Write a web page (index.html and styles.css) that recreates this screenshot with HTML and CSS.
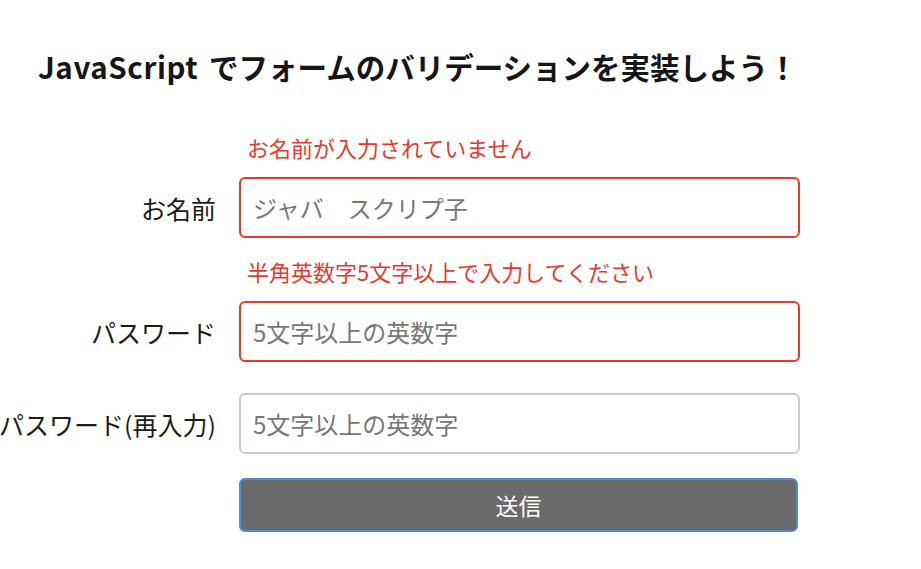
FILE: index.html
```html
<!DOCTYPE html>
<html lang="ja">
<head>
<meta charset="utf-8">
<title>JavaScript でフォームのバリデーションを実装しよう！</title>
<link rel="stylesheet" href="styles.css">
</head>
<body>
<main class="page">
  <h1 class="title"><span class="latin">JavaScript</span> でフォームのバリデーションを実装しよう！</h1>
  <form class="form">
    <div class="field has-error">
      <p class="error">お名前が入力されていません</p>
      <label class="label" for="name">お名前</label>
      <input class="input invalid" id="name" type="text" placeholder="ジャバ　スクリプ子">
    </div>
    <div class="field has-error">
      <p class="error">半角英数字5文字以上で入力してください</p>
      <label class="label" for="pw">パスワード</label>
      <input class="input invalid" id="pw" type="password" placeholder="5文字以上の英数字">
    </div>
    <div class="field">
      <label class="label" for="pw2">パスワード(再入力)</label>
      <input class="input" id="pw2" type="password" placeholder="5文字以上の英数字">
    </div>
    <div class="actions">
      <button class="submit" type="button">送信</button>
    </div>
  </form>
</main>
</body>
</html>
```
FILE: styles.css
```css
html, body {
  margin: 0;
  padding: 0;
  background: #ffffff;
}
body {
  font-family: "Noto Sans CJK JP", "Noto Sans", sans-serif;
  color: #1c1c1c;
}
.page {
  padding-top: 46px;
}
.title {
  margin: 0 0 0 38px;
  font-size: 29.5px;
  line-height: 40px;
  font-weight: 700;
  color: #161616;
  white-space: nowrap;
}
.latin {
  letter-spacing: 0.6px;
  margin-right: 4px;
}
.form {
  margin-top: 28px;
  display: flex;
  flex-direction: column;
}
.field {
  display: grid;
  grid-template-columns: 216px 561px;
  grid-template-areas:
    ".     error"
    "label input";
  column-gap: 23px;
  margin-top: 31px;
}
.field.has-error {
  margin-top: 18px;
}
.error {
  grid-area: error;
  margin: 0 0 15px 8px;
  font-size: 22px;
  line-height: 30px;
  color: #e5392c;
  white-space: nowrap;
}
.label {
  grid-area: label;
  align-self: center;
  display: flex;
  justify-content: flex-end;
  font-size: 25px;
  line-height: 30px;
  white-space: nowrap;
  color: #1c1c1c;
}
.input {
  grid-area: input;
  box-sizing: border-box;
  width: 561px;
  height: 61px;
  margin: 0;
  padding: 0 12px;
  border: 2px solid #cbcbcb;
  border-radius: 6px;
  font-family: inherit;
  font-size: 24px;
  color: #1c1c1c;
  background: #ffffff;
  outline: none;
}
.input::placeholder {
  color: #777777;
}
.input.invalid {
  border-color: #e5392c;
}
.actions {
  margin-top: 24px;
  padding-left: 239px;
}
.submit {
  box-sizing: border-box;
  width: 559px;
  height: 54px;
  margin: 0;
  border: 2px solid #4a8fd6;
  border-radius: 6px;
  background: #6a6a6a;
  color: #ffffff;
  font-family: inherit;
  font-size: 23px;
  cursor: pointer;
}
```
